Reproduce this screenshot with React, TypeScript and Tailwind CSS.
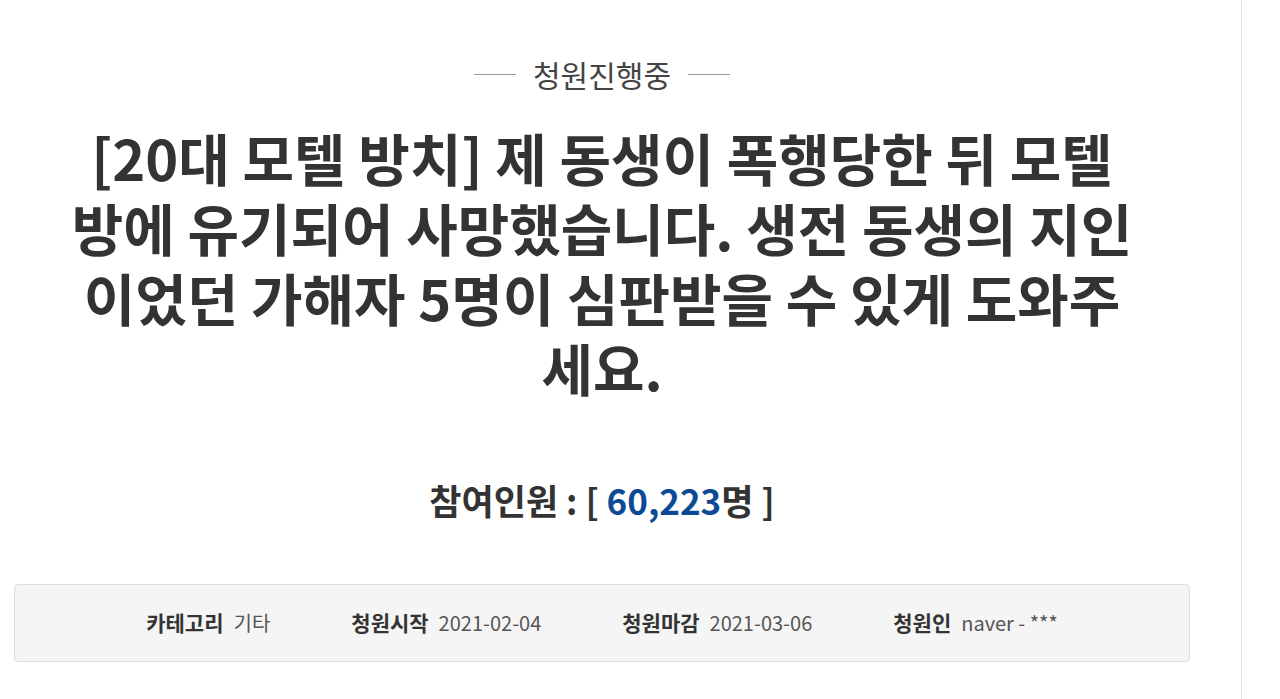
const font = { fontFamily: '"Noto Sans CJK KR", "Noto Sans", sans-serif' };

const info = [
  { label: "카테고리", value: "기타" },
  { label: "청원시작", value: "2021-02-04" },
  { label: "청원마감", value: "2021-03-06" },
  { label: "청원인", value: "naver - ***" },
];

export default function App() {
  return (
    <div className="flex min-h-screen bg-white text-[#333]" style={font}>
      <main className="w-[1241px] shrink-0 pl-[14px] pr-[51px] pt-[56px]">
        <div className="flex items-center justify-center gap-[17px]">
          <span className="h-px w-[42px] bg-[#999]" />
          <span className="text-[30px] leading-[36px] text-[#444]">청원진행중</span>
          <span className="h-px w-[42px] bg-[#999]" />
        </div>

        <h1 className="mx-auto mt-[30px] max-w-[1078px] text-center text-[56px] font-bold leading-[70px] text-[#333]">
          [20대 모텔 방치] 제 동생이 폭행당한 뒤 모텔 방에 유기되어 사망했습니다. 생전 동생의 지인이었던 가해자 5명이 심판받을 수 있게 도와주세요.
        </h1>

        <p className="mt-[78px] text-center text-[35px] font-bold leading-[40px] text-[#333]">
          참여인원 : [ <span className="text-[#0d4a96]">60,223</span>명 ]
        </p>

        <div className="mt-[64px] flex h-[78px] items-center justify-center gap-[81px] rounded-[4px] border border-[#ddd] bg-[#f5f5f5]">
          {info.map((item) => (
            <div key={item.label} className="flex items-center gap-[10px]">
              <span className="text-[21px] font-bold text-[#333]">{item.label}</span>
              <span className="text-[20px] text-[#555]">{item.value}</span>
            </div>
          ))}
        </div>
      </main>
      <aside className="flex-1 border-l border-[#e5e5e5]" />
    </div>
  );
}
